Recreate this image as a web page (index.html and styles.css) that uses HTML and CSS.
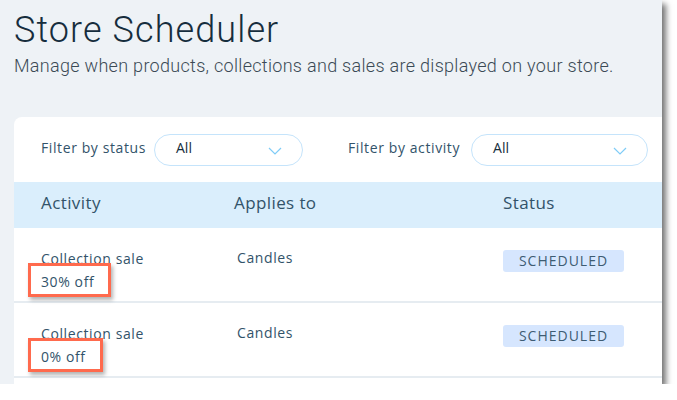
FILE: index.html
```html
<!DOCTYPE html>
<html>
<head>
    <link rel="stylesheet" href="styles.css">
</head>
<body>
    <div class="shot">
        <div class="page-header">
            <h1>Store Scheduler</h1>
            <p class="subtitle">Manage when products, collections and sales are displayed on your store.</p>
        </div>

        <div class="card">
            <div class="filters">
                <div class="filter">
                    <span class="filter-label">Filter by status</span>
                    <div class="select select-status">
                        <span>All</span>
                        <svg width="14" height="8" viewBox="0 0 14 8" fill="none" stroke="#7fccf7" stroke-width="1.2">
                            <path d="M1 1l6 6 6-6"></path>
                        </svg>
                    </div>
                </div>
                <div class="filter">
                    <span class="filter-label">Filter by activity</span>
                    <div class="select select-activity">
                        <span>All</span>
                        <svg width="14" height="8" viewBox="0 0 14 8" fill="none" stroke="#7fccf7" stroke-width="1.2">
                            <path d="M1 1l6 6 6-6"></path>
                        </svg>
                    </div>
                </div>
            </div>

            <div class="table-head">
                <div>Activity</div>
                <div>Applies to</div>
                <div>Status</div>
            </div>

            <div class="row">
                <div class="activity">
                    <div>Collection sale</div>
                    <div class="discount"><span class="highlight">30% off</span></div>
                </div>
                <div class="applies">Candles</div>
                <div><span class="badge">SCHEDULED</span></div>
            </div>
            <div class="row">
                <div class="activity">
                    <div>Collection sale</div>
                    <div class="discount"><span class="highlight">0% off</span></div>
                </div>
                <div class="applies">Candles</div>
                <div><span class="badge">SCHEDULED</span></div>
            </div>
        </div>
    </div>
</body>
</html>
```

FILE: styles.css
```css
* {
    margin: 0;
    padding: 0;
    box-sizing: border-box;
}

body {
    background: #ffffff;
    font-family: 'Open Sans', 'Noto Sans', sans-serif;
    color: #32536a;
}

.shot {
    width: 662px;
    height: 384px;
    background: #eef2f6;
    box-shadow: 4px 4px 6px rgba(0, 0, 0, 0.55);
    overflow: hidden;
    padding-left: 14px;
}

.page-header {
    height: 117px;
    padding-top: 8px;
}

h1 {
    font-family: Roboto, 'Liberation Sans', sans-serif;
    font-weight: 300;
    font-size: 36px;
    line-height: 44px;
    letter-spacing: 1.1px;
    color: #162d3d;
}

.subtitle {
    font-family: Roboto, 'Liberation Sans', sans-serif;
    font-weight: 300;
    font-size: 18px;
    line-height: 24px;
    letter-spacing: 0.3px;
    color: #3b4a55;
    margin-top: 2px;
}

.card {
    background: #ffffff;
    border-top-left-radius: 8px;
    height: 300px;
}

.filters {
    height: 65px;
    display: flex;
    align-items: center;
    padding-left: 27px;
    gap: 45px;
}

.filter {
    display: flex;
    align-items: center;
    gap: 8px;
}

.filter-label {
    font-size: 14px;
    letter-spacing: 0.6px;
    color: #32536a;
    margin-top: -4px;
}

.select {
    height: 32px;
    border: 1px solid #c5e4fb;
    border-radius: 16px;
    display: flex;
    align-items: center;
    justify-content: space-between;
    padding: 0 20px 0 21px;
    font-size: 14px;
    color: #162d3d;
}

.select span {
    margin-top: -4px;
}

.select svg {
    margin-top: 3px;
}

.select-status {
    width: 149px;
}

.select-activity {
    width: 177px;
    margin-left: 3px;
}

.table-head,
.row {
    display: grid;
    grid-template-columns: 193px 269px 1fr;
    padding-left: 27px;
}

.table-head {
    height: 46px;
    align-items: center;
    padding-bottom: 6px;
    background: #daeefc;
    font-size: 17px;
    letter-spacing: 0.4px;
    color: #32536a;
}

.row {
    height: 75px;
    border-bottom: 2px solid #e6ecf1;
    padding-top: 20px;
    font-size: 14px;
    letter-spacing: 0.6px;
    color: #32536a;
}

.activity {
    line-height: 21px;
}

.highlight {
    display: inline-block;
    line-height: 19px;
    margin: -6px 0 -6px -13px;
    padding: 6px 14px 3px 10px;
    border: 3px solid #ff6a4d;
    box-shadow: 2px 3px 4px rgba(0, 0, 0, 0.3);
}

.applies {
    padding-left: 3px;
}

.badge {
    display: inline-block;
    width: 121px;
    height: 22px;
    line-height: 22px;
    margin-top: 2px;
    background: #d6e6fe;
    border-radius: 3px;
    text-align: center;
    font-size: 14px;
    letter-spacing: 1px;
    color: #3e5c73;
}
```
